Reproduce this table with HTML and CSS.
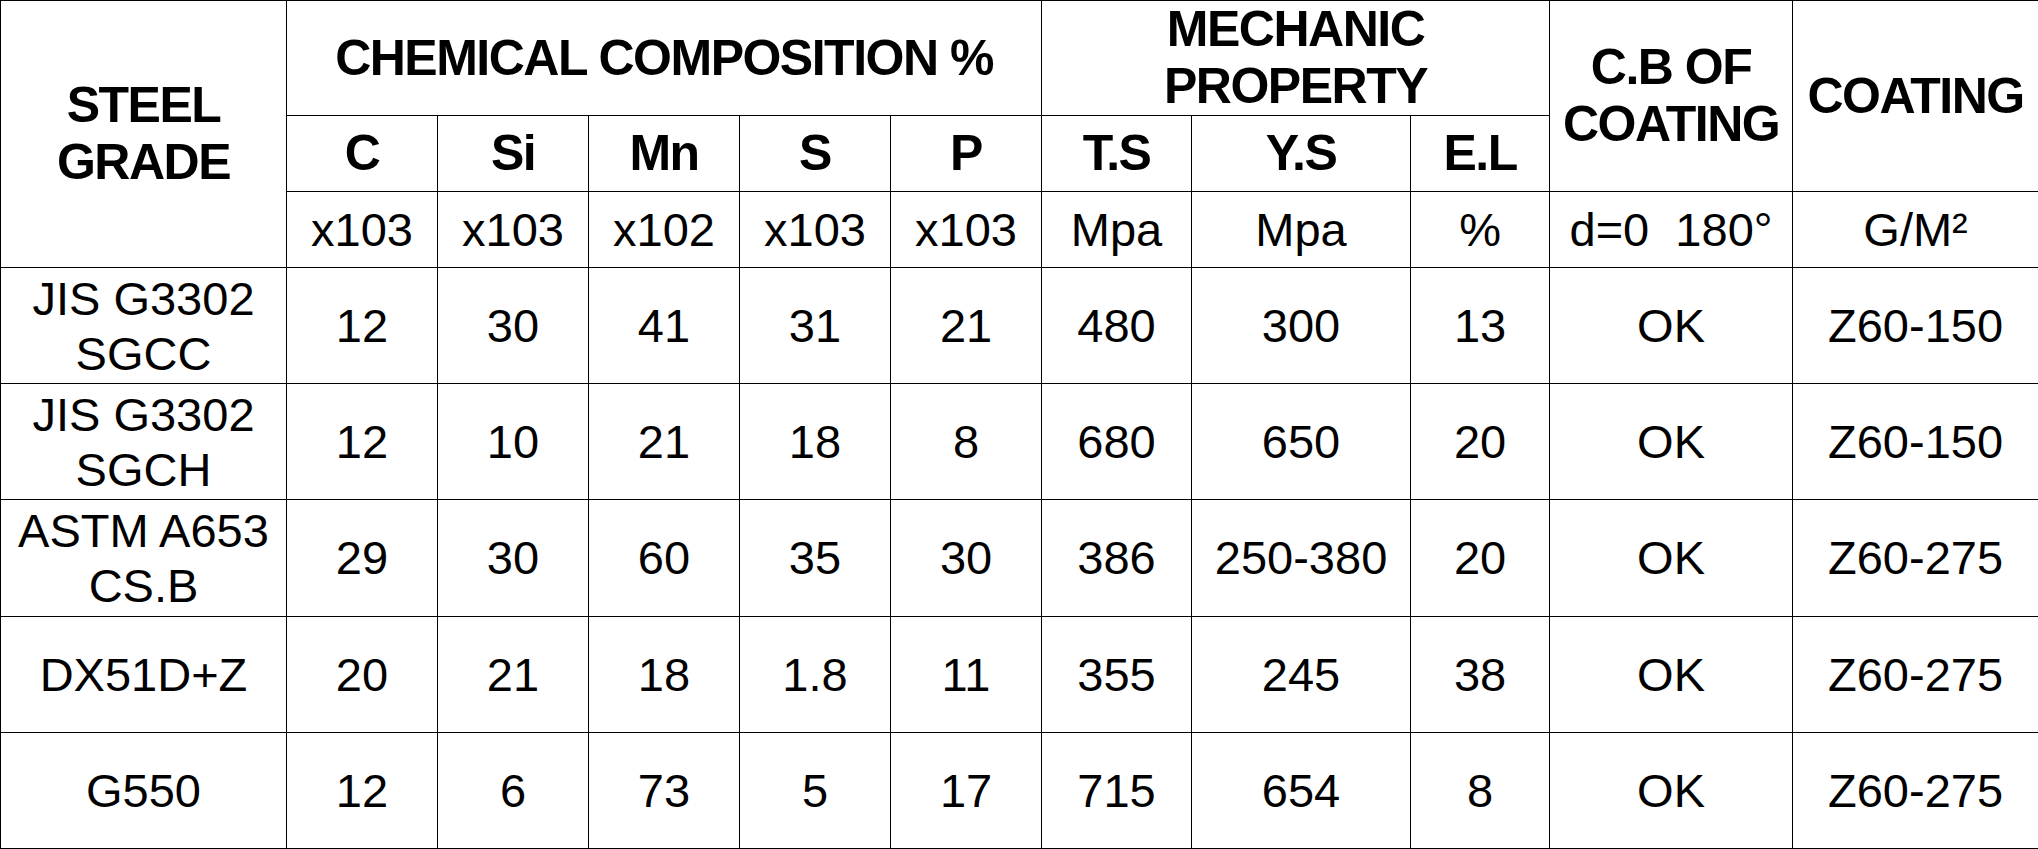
FILE: index.html
```html
<!DOCTYPE html>
<html>
<head>
<meta charset="utf-8">
<link rel="stylesheet" href="styles.css">
</head>
<body>
<table class="spec">
  <colgroup>
    <col class="c-grade">
    <col class="c-chem"><col class="c-chem"><col class="c-chem"><col class="c-chem"><col class="c-chem">
    <col class="c-ts"><col class="c-ys"><col class="c-el">
    <col class="c-cb"><col class="c-coat">
  </colgroup>
  <thead>
    <tr class="r-top">
      <th rowspan="3">STEEL<br>GRADE</th>
      <th colspan="5">CHEMICAL COMPOSITION %</th>
      <th colspan="3">MECHANIC<br>PROPERTY</th>
      <th rowspan="2">C.B OF<br>COATING</th>
      <th rowspan="2">COATING</th>
    </tr>
    <tr class="r-sub">
      <th>C</th><th>Si</th><th>Mn</th><th>S</th><th>P</th>
      <th>T.S</th><th>Y.S</th><th>E.L</th>
    </tr>
    <tr class="r-unit">
      <td>x103</td><td>x103</td><td>x102</td><td>x103</td><td>x103</td>
      <td>Mpa</td><td>Mpa</td><td>%</td><td>d=0&nbsp;&nbsp;180°</td><td>G/M²</td>
    </tr>
  </thead>
  <tbody>
    <tr>
      <td>JIS G3302<br>SGCC</td>
      <td>12</td><td>30</td><td>41</td><td>31</td><td>21</td>
      <td>480</td><td>300</td><td>13</td><td>OK</td><td>Z60-150</td>
    </tr>
    <tr>
      <td>JIS G3302<br>SGCH</td>
      <td>12</td><td>10</td><td>21</td><td>18</td><td>8</td>
      <td>680</td><td>650</td><td>20</td><td>OK</td><td>Z60-150</td>
    </tr>
    <tr>
      <td>ASTM A653<br>CS.B</td>
      <td>29</td><td>30</td><td>60</td><td>35</td><td>30</td>
      <td>386</td><td>250-380</td><td>20</td><td>OK</td><td>Z60-275</td>
    </tr>
    <tr>
      <td>DX51D+Z</td>
      <td>20</td><td>21</td><td>18</td><td>1.8</td><td>11</td>
      <td>355</td><td>245</td><td>38</td><td>OK</td><td>Z60-275</td>
    </tr>
    <tr class="r-last">
      <td>G550</td>
      <td>12</td><td>6</td><td>73</td><td>5</td><td>17</td>
      <td>715</td><td>654</td><td>8</td><td>OK</td><td>Z60-275</td>
    </tr>
  </tbody>
</table>
</body>
</html>
```

FILE: styles.css
```css
html, body {
  margin: 0;
  padding: 0;
  background: #fff;
}

.spec {
  width: 2038px;
  height: 849px;
  border-collapse: collapse;
  table-layout: fixed;
  font-family: "Liberation Sans", Arial, sans-serif;
  color: #000;
}

.c-grade { width: 286px; }
.c-chem { width: 151px; }
.c-ts { width: 150px; }
.c-ys { width: 219px; }
.c-el { width: 139px; }
.c-cb { width: 243px; }
.c-coat { width: 246px; }

.spec th,
.spec td {
  border: 1px solid #000;
  padding: 0;
  text-align: center;
  vertical-align: middle;
  white-space: nowrap;
}

.spec th {
  font-weight: bold;
  font-size: 50px;
  letter-spacing: -1.5px;
  line-height: 57px;
}

.spec td {
  font-weight: normal;
  font-size: 47px;
  line-height: 55px;
}

.r-top { height: 115px; }
.r-sub { height: 76px; }
.r-unit { height: 76px; }
.spec tbody tr { height: 116px; }
.spec tbody tr.r-last { height: 116px; }
```
